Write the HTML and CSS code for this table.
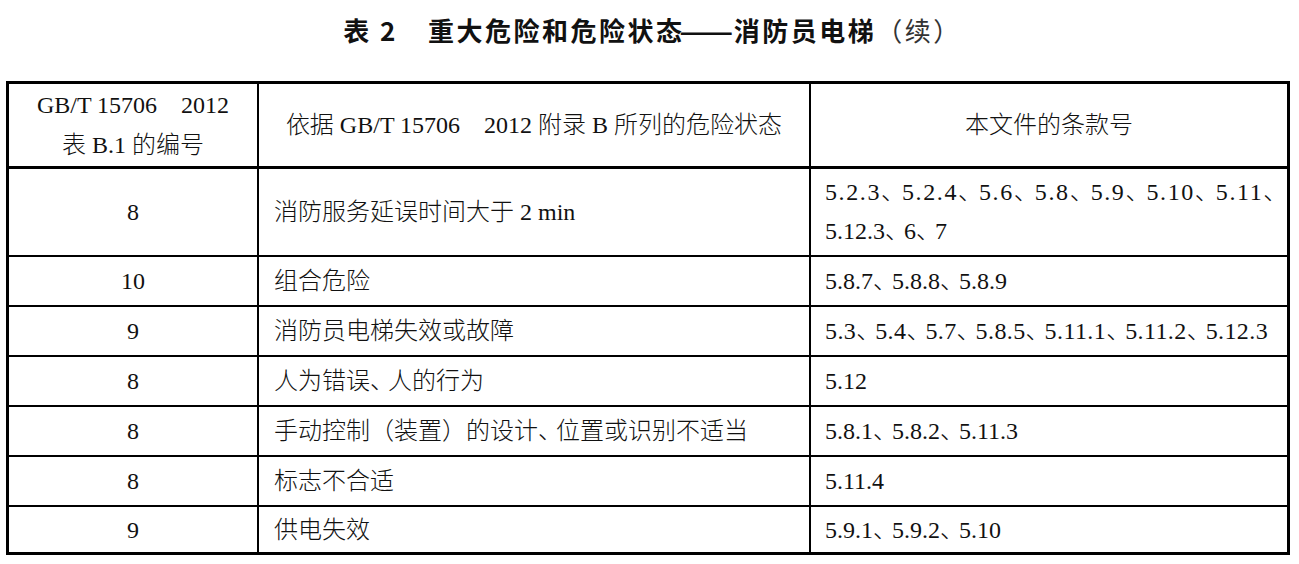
FILE: index.html
```html
<!DOCTYPE html>
<html lang="zh-CN">
<head>
<meta charset="utf-8">
<title>表 2 重大危险和危险状态——消防员电梯（续）</title>
<link rel="stylesheet" href="styles.css">
</head>
<body>
<div class="page">
  <h1 class="title"><span class="tnum">表 2</span><span class="tgap"></span>重大危险和危险状态<span class="dash">——</span>消防员电梯<span class="cont">（续）</span></h1>
  <div class="grid">
    <div class="cell head c1">GB/T 15706　2012<br>表 B.1 的编号</div>
    <div class="cell head c2">依据 GB/T 15706　2012 附录 B 所列的危险状态</div>
    <div class="cell head c3">本文件的条款号</div>

    <div class="cell c1 r-tall">8</div>
    <div class="cell c2 r-tall">消防服务延误时间大于 2 min</div>
    <div class="cell c3 r-tall multi"><span class="wide">5.2.3<span class="dun">、</span>5.2.4<span class="dun">、</span>5.6<span class="dun">、</span>5.8<span class="dun">、</span>5.9<span class="dun">、</span>5.10<span class="dun">、</span>5.11<span class="dun">、</span></span><br>5.12.3<span class="dun">、</span>6<span class="dun">、</span>7</div>

    <div class="cell c1">10</div>
    <div class="cell c2">组合危险</div>
    <div class="cell c3">5.8.7<span class="dun">、</span>5.8.8<span class="dun">、</span>5.8.9</div>

    <div class="cell c1">9</div>
    <div class="cell c2">消防员电梯失效或故障</div>
    <div class="cell c3 loose">5.3<span class="dun">、</span>5.4<span class="dun">、</span>5.7<span class="dun">、</span>5.8.5<span class="dun">、</span>5.11.1<span class="dun">、</span>5.11.2<span class="dun">、</span>5.12.3</div>

    <div class="cell c1">8</div>
    <div class="cell c2">人为错误<span class="dun">、</span>人的行为</div>
    <div class="cell c3">5.12</div>

    <div class="cell c1">8</div>
    <div class="cell c2">手动控制（装置）的设计<span class="dun">、</span>位置或识别不适当</div>
    <div class="cell c3">5.8.1<span class="dun">、</span>5.8.2<span class="dun">、</span>5.11.3</div>

    <div class="cell c1">8</div>
    <div class="cell c2">标志不合适</div>
    <div class="cell c3">5.11.4</div>

    <div class="cell c1 r-last">9</div>
    <div class="cell c2 r-last">供电失效</div>
    <div class="cell c3 r-last">5.9.1<span class="dun">、</span>5.9.2<span class="dun">、</span>5.10</div>
  </div>
</div>
</body>
</html>
```

FILE: styles.css
```css
html, body {
  margin: 0;
  padding: 0;
  background: #ffffff;
}

.page {
  width: 1299px;
  height: 564px;
  overflow: hidden;
  font-family: "Liberation Serif", "Noto Sans CJK SC", serif;
  color: #111111;
}

.title {
  margin: 0;
  height: 81px;
  box-sizing: border-box;
  padding-top: 13px;
  padding-left: 6px;
  text-align: center;
  font-family: "Noto Sans CJK SC", sans-serif;
  font-size: 26px;
  line-height: 34px;
  font-weight: 700;
  letter-spacing: 2.5px;
  color: #111111;
}

.tgap {
  display: inline-block;
  width: 30px;
}

.dash {
  letter-spacing: 0;
  display: inline-block;
  transform: scaleX(1.22);
  margin: 0 5px 0 0;
}

.cont {
  font-weight: 400;
  color: #333333;
}

.grid {
  margin-left: 6px;
  width: 1284px;
  box-sizing: border-box;
  border: 3px solid #000000;
  background: #000000;
  display: grid;
  grid-template-columns: 248px 550px 476px;
  grid-template-rows: 83px 86px 48px 48px 48px 48px 48px 45px;
  gap: 2px;
}

.cell {
  background: #ffffff;
  display: flex;
  align-items: center;
  font-size: 24px;
  line-height: 40px;
  font-weight: 300;
  white-space: nowrap;
}

.head {
  margin-bottom: 1px;
}

.c1 {
  justify-content: center;
  text-align: center;
}

.c2 {
  padding-left: 15px;
}

.c3 {
  padding-left: 14px;
}

.head.c2,
.head.c3 {
  justify-content: center;
  padding-left: 0;
}

.multi {
  display: block;
  padding-top: 4px;
  line-height: 39px;
}

.dun {
  letter-spacing: -5px;
}

.c2 .dun {
  letter-spacing: -6px;
}

.loose {
  letter-spacing: 0.4px;
}

.wide {
  letter-spacing: 1.6px;
}

.wide .dun {
  letter-spacing: -3px;
}
```
